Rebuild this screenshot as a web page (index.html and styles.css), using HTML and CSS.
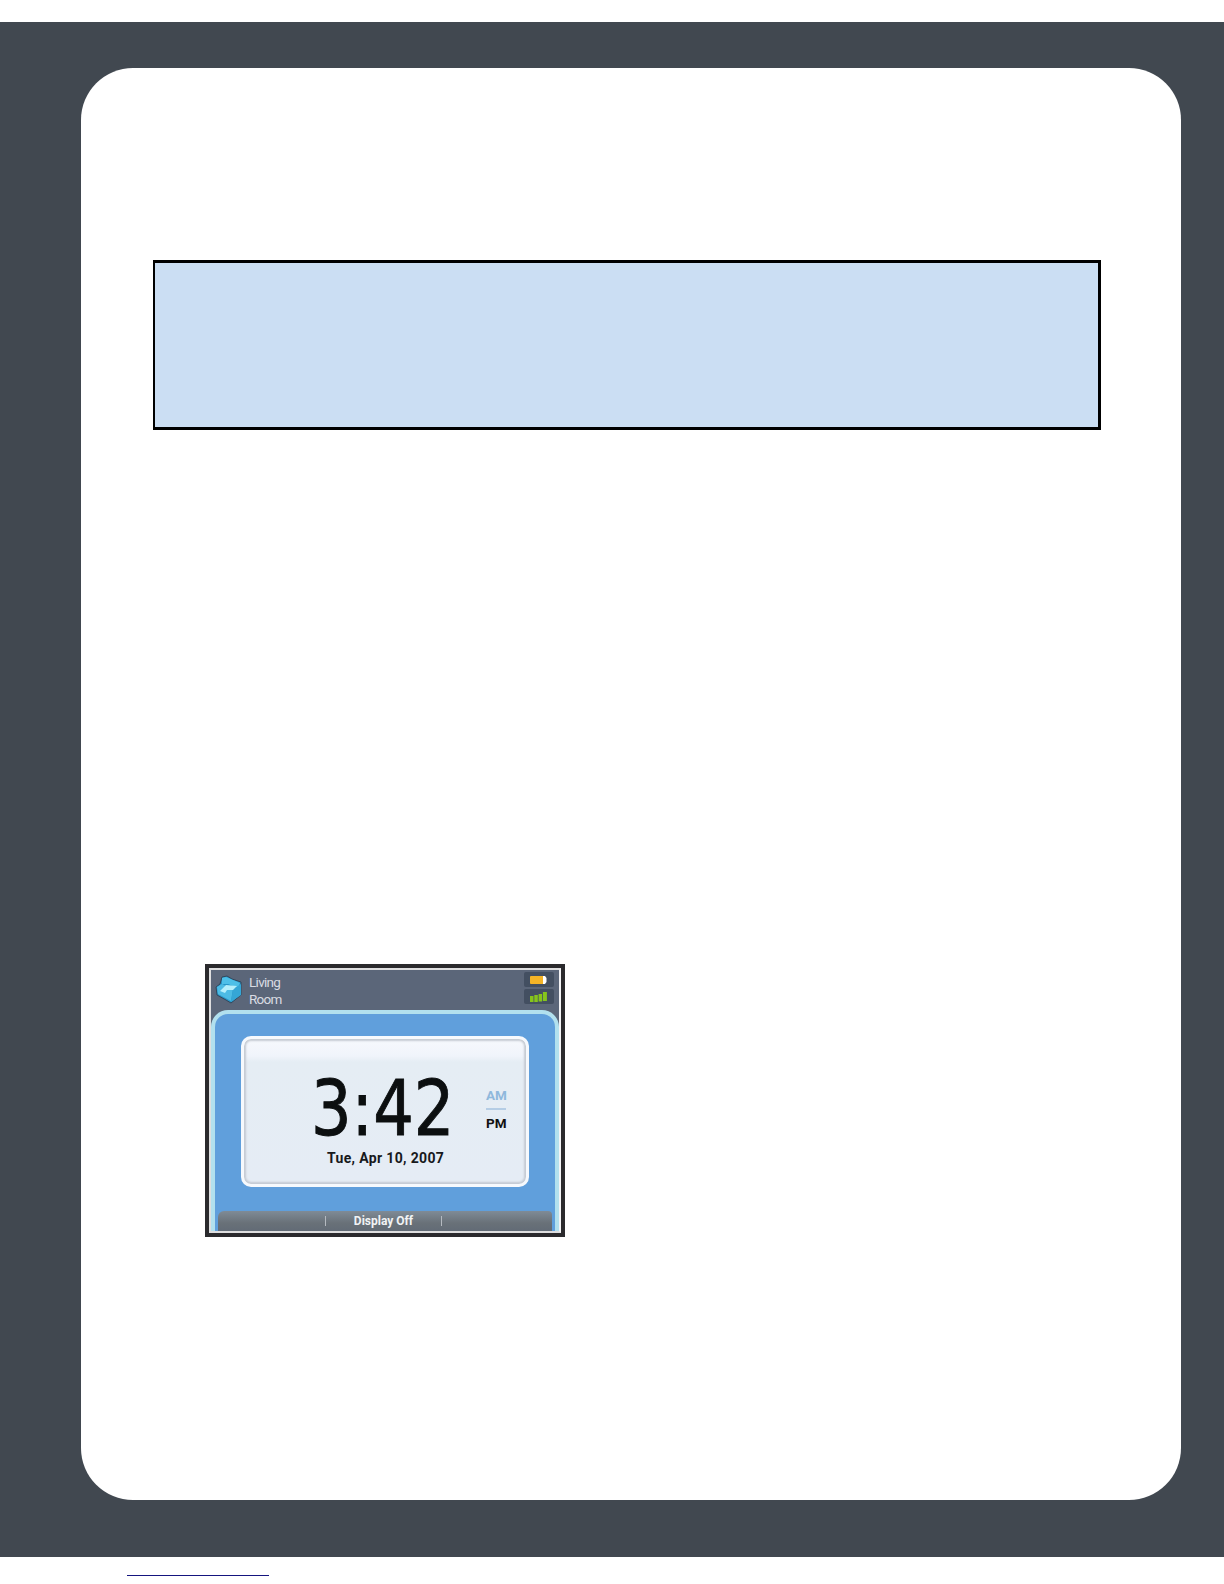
FILE: index.html
```
<!DOCTYPE html>
<html>
<head>
	<meta charset="utf-8">
	<title>Display Off</title>
	<link rel="stylesheet" href="styles.css">
</head>
<body>
<div id="frame">
	<div id="sheet">
		<div class="note"></div>
		<div class="device">
			<div class="screen">
				<div class="topbar">
					<svg class="room-icon" width="28" height="30" viewBox="0 0 28 30">
						<path d="M1 12L5 9L7 2L12 1L17 4L26 7V20L16 28L11 25L2 20Z" fill="#2796c8" stroke="#33465b" stroke-width="1"/>
						<path d="M7 3L11 2L25 8L23 13L13 9L7 9Z" fill="#4dbfe8"/>
						<path d="M2 12L7 9L18 14L16 26L3 19Z" fill="#4dbbe4"/>
						<path d="M18 14L26 9V20L16 27Z" fill="#35a6d6"/>
						<path d="M5 16L11 10L22 11L18 15L12 15L10 18Z" fill="#b5effc"/>
					</svg>
					<div class="room">Living<br>Room</div>
					<div class="status">
						<div class="badge">
							<svg width="18" height="8" viewBox="0 0 18 8">
								<rect width="14" height="8" rx="1" fill="#f4b427"/>
								<path d="M13 0H15L16.500 2V6L15 8H13Z" fill="#fff"/>
							</svg>
						</div>
						<div class="badge">
							<svg width="18" height="10" viewBox="0 0 18 10">
								<path d="M0 4h3.500v6h-3.500zM4.300 3h3.500v7h-3.500zM8.600 2h3.500v7.500h-3.500zM12.900 0h4v9h-4z" fill="#86c51b"/>
							</svg>
						</div>
					</div>
				</div>
				<div class="panel">
					<div class="card">
						<div class="clock">3:42</div>
						<div class="ampm">
							<span class="am">AM</span>
							<span class="pm">PM</span>
						</div>
						<div class="date">Tue, Apr 10, 2007</div>
					</div>
					<div class="softkeys">
						<span></span>
						<span class="key">Display Off</span>
						<span></span>
					</div>
				</div>
			</div>
		</div>
	</div>
</div>
<div class="link-line"></div>
</body>
</html>
```
FILE: styles.css
```
body{
	margin: 0;
	background: white;
	height: 1584px;
	overflow: hidden;
	padding-top: 22px;
	box-sizing: border-box;
}
#frame{
	background: #414850;
	height: 1535px;
	box-sizing: border-box;
	padding: 45.500px 43px 57px 80.500px;
}
#sheet{
	background: white;
	height: 100%;
	border-radius: 52px;
	box-sizing: border-box;
	padding: 192.500px 80.500px 0 72.500px;
}
.note{
	height: 170px;
	box-sizing: border-box;
	background: #cbdef3;
	border: 3px solid black;
	border-left-width: 2px;
}
.device{
	width: 360px;
	height: 273px;
	margin: 534px 0 0 52px;
	box-sizing: border-box;
	background: #2b2a2d;
	padding: 4px;
}
.screen{
	height: 265px;
	box-sizing: border-box;
	border: 2px solid #dededf;
	border-right-color: #f3f3f5;
	background: #5b6679;
	display: flex;
	flex-direction: column;
}
.topbar{
	height: 40px;
	display: flex;
}
.room-icon{
	margin: 5px 0 0 4px;
}
.room{
	flex: 1;
	color: #d9dce3;
	font: 13.500px/17px "Roboto", sans-serif;
	letter-spacing: -0.7px;
	margin: 4px 0 0 6px;
}
.status{
	display: flex;
	flex-direction: column;
	gap: 2px;
	margin: 2px 5px 0 0;
}
.badge{
	width: 30px;
	height: 15px;
	border-radius: 2px;
	background: #434f61;
	display: flex;
	align-items: center;
	justify-content: center;
}
.panel{
	flex: 1;
	box-sizing: border-box;
	border: 4px solid #b2e0ee;
	border-bottom: none;
	border-radius: 17px 17px 0 0;
	background: #609fdc;
	display: flex;
	flex-direction: column;
	align-items: center;
	justify-content: space-between;
	padding-top: 22px;
}
.card{
	width: 288px;
	height: 151px;
	box-sizing: border-box;
	border: 3px solid #f6f9fd;
	border-radius: 10px;
	background: linear-gradient(#f7f9fd 0, #f0f4fb 17px, #e5edf4 23px, #e5ecf5);
	box-shadow: inset 0 0 2px 2px #c5cbd3;
	display: grid;
	grid-template-columns: 1fr 40px;
	grid-template-rows: 109px 1fr;
}
.clock{
	font: 76px/78px "DejaVu Sans", sans-serif;
	color: #0c0f10;
	-webkit-text-stroke: 1px #0c0f10;
	padding-top: 31px;
	margin-left: 67px;
	width: 171px;
	transform: scaleX(.84);
	transform-origin: 0 0;
}
.ampm{
	display: flex;
	flex-direction: column;
	width: 20px;
	margin-top: 46px;
	font: bold 13.500px/22px "Roboto", sans-serif;
}
.am{
	color: #8fb8dc;
	height: 23px;
	line-height: 20px;
	border-bottom: 2px solid #b5cde5;
}
.pm{
	color: #111;
	line-height: 27px;
}
.date{
	grid-column: 1 / 3;
	color: #17191c;
	font: bold 14px/20px "Roboto", sans-serif;
	letter-spacing: .35px;
	padding-left: 83px;
	white-space: nowrap;
}
.softkeys{
	width: 334px;
	height: 20px;
	border-radius: 6px 4px 0 0;
	background: linear-gradient(#7f8b96, #697178 60%, #626b76);
	display: grid;
	grid-template-columns: 107px 117px 1fr;
	align-items: center;
}
.key{
	height: 10px;
	border-left: 1px solid #b5bac0;
	border-right: 1px solid #b5bac0;
	color: #f1f3f5;
	text-align: center;
	font: bold 12px/10px "Roboto", sans-serif;
}
.link-line{
	width: 142px;
	height: 1px;
	background: #15157f;
	margin: 18px 0 0 127px;
}
```
